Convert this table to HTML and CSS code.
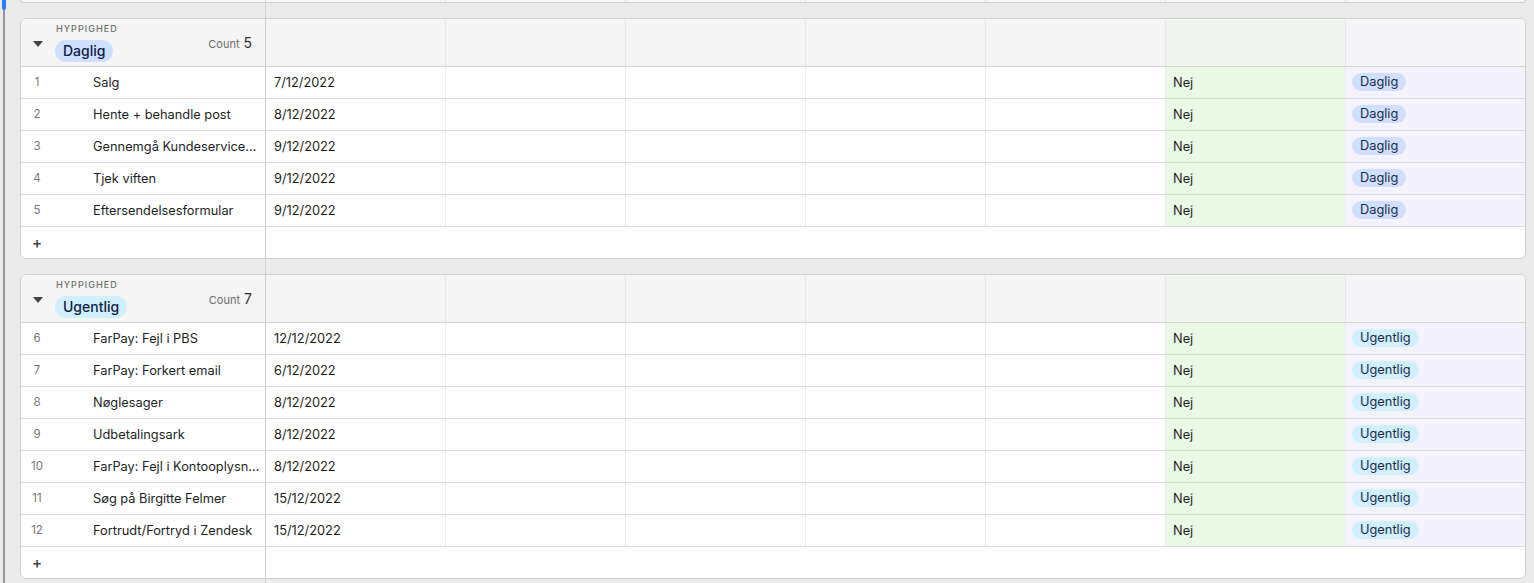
FILE: index.html
```html
<!DOCTYPE html>
<html lang="da">
<head>
<meta charset="utf-8">
<title>Hyppighed</title>
<link rel="stylesheet" href="styles.css">
</head>
<body>
<div class="scrollbar"></div>
<div class="view">
  <div class="prev grid">
    <div class="c first"></div><div class="c"></div><div class="c"></div><div class="c"></div><div class="c"></div><div class="c"></div><div class="c"></div><div class="c last"></div>
  </div>

  <section class="group">
    <div class="ghead grid">
      <div class="c first">
        <span class="tri"></span>
        <div class="gl">
          <span class="glabel">HYPPIGHED</span>
          <span class="gtag blue">Daglig</span>
        </div>
        <span class="count"><span class="cl">Count</span><span class="cn">5</span></span>
      </div>
      <div class="c"></div><div class="c"></div><div class="c"></div><div class="c"></div><div class="c"></div><div class="c green"></div><div class="c lav last"></div>
    </div>
    <div class="row grid"><div class="c first"><span class="num">1</span><span class="name">Salg</span></div><div class="c">7/12/2022</div><div class="c"></div><div class="c"></div><div class="c"></div><div class="c"></div><div class="c green">Nej</div><div class="c lav last"><span class="tag blue">Daglig</span></div></div>
    <div class="row grid"><div class="c first"><span class="num">2</span><span class="name">Hente + behandle post</span></div><div class="c">8/12/2022</div><div class="c"></div><div class="c"></div><div class="c"></div><div class="c"></div><div class="c green">Nej</div><div class="c lav last"><span class="tag blue">Daglig</span></div></div>
    <div class="row grid"><div class="c first"><span class="num">3</span><span class="name">Gennemgå Kundeservice…</span></div><div class="c">9/12/2022</div><div class="c"></div><div class="c"></div><div class="c"></div><div class="c"></div><div class="c green">Nej</div><div class="c lav last"><span class="tag blue">Daglig</span></div></div>
    <div class="row grid"><div class="c first"><span class="num">4</span><span class="name">Tjek viften</span></div><div class="c">9/12/2022</div><div class="c"></div><div class="c"></div><div class="c"></div><div class="c"></div><div class="c green">Nej</div><div class="c lav last"><span class="tag blue">Daglig</span></div></div>
    <div class="row grid"><div class="c first"><span class="num">5</span><span class="name">Eftersendelsesformular</span></div><div class="c">9/12/2022</div><div class="c"></div><div class="c"></div><div class="c"></div><div class="c"></div><div class="c green">Nej</div><div class="c lav last"><span class="tag blue">Daglig</span></div></div>
    <div class="add grid"><div class="c first"><span class="num plus">+</span></div><div class="c wide"></div></div>
  </section>

  <section class="group">
    <div class="ghead grid">
      <div class="c first">
        <span class="tri"></span>
        <div class="gl">
          <span class="glabel">HYPPIGHED</span>
          <span class="gtag cyan">Ugentlig</span>
        </div>
        <span class="count"><span class="cl">Count</span><span class="cn">7</span></span>
      </div>
      <div class="c"></div><div class="c"></div><div class="c"></div><div class="c"></div><div class="c"></div><div class="c green"></div><div class="c lav last"></div>
    </div>
    <div class="row grid"><div class="c first"><span class="num">6</span><span class="name">FarPay: Fejl i PBS</span></div><div class="c">12/12/2022</div><div class="c"></div><div class="c"></div><div class="c"></div><div class="c"></div><div class="c green">Nej</div><div class="c lav last"><span class="tag cyan">Ugentlig</span></div></div>
    <div class="row grid"><div class="c first"><span class="num">7</span><span class="name">FarPay: Forkert email</span></div><div class="c">6/12/2022</div><div class="c"></div><div class="c"></div><div class="c"></div><div class="c"></div><div class="c green">Nej</div><div class="c lav last"><span class="tag cyan">Ugentlig</span></div></div>
    <div class="row grid"><div class="c first"><span class="num">8</span><span class="name">Nøglesager</span></div><div class="c">8/12/2022</div><div class="c"></div><div class="c"></div><div class="c"></div><div class="c"></div><div class="c green">Nej</div><div class="c lav last"><span class="tag cyan">Ugentlig</span></div></div>
    <div class="row grid"><div class="c first"><span class="num">9</span><span class="name">Udbetalingsark</span></div><div class="c">8/12/2022</div><div class="c"></div><div class="c"></div><div class="c"></div><div class="c"></div><div class="c green">Nej</div><div class="c lav last"><span class="tag cyan">Ugentlig</span></div></div>
    <div class="row grid"><div class="c first"><span class="num">10</span><span class="name">FarPay: Fejl i Kontooplysn…</span></div><div class="c">8/12/2022</div><div class="c"></div><div class="c"></div><div class="c"></div><div class="c"></div><div class="c green">Nej</div><div class="c lav last"><span class="tag cyan">Ugentlig</span></div></div>
    <div class="row grid"><div class="c first"><span class="num">11</span><span class="name">Søg på Birgitte Felmer</span></div><div class="c">15/12/2022</div><div class="c"></div><div class="c"></div><div class="c"></div><div class="c"></div><div class="c green">Nej</div><div class="c lav last"><span class="tag cyan">Ugentlig</span></div></div>
    <div class="row grid"><div class="c first"><span class="num">12</span><span class="name">Fortrudt/Fortryd i Zendesk</span></div><div class="c">15/12/2022</div><div class="c"></div><div class="c"></div><div class="c"></div><div class="c"></div><div class="c green">Nej</div><div class="c lav last"><span class="tag cyan">Ugentlig</span></div></div>
    <div class="add grid"><div class="c first"><span class="num plus">+</span></div><div class="c wide"></div></div>
  </section>
</div>
</body>
</html>
```
FILE: styles.css
```css
* { box-sizing: border-box; }

html, body { height: 100%; }

body {
  margin: 0;
  overflow: hidden;
  background:
    linear-gradient(to right, transparent 265px, #d3d3d3 265px, #d3d3d3 266px, transparent 266px),
    #ebebeb;
  font-family: Inter, "Liberation Sans", "Noto Sans", sans-serif;
  color: #1d1f25;
  position: relative;
}

.scrollbar {
  position: absolute;
  left: 3px;
  top: 0;
  bottom: 0;
  width: 2px;
  background: #979797;
  z-index: 2;
}
.scrollbar::before {
  content: "";
  position: absolute;
  left: -1px;
  top: 0;
  width: 4px;
  height: 10px;
  background: #2d7ff9;
  border-radius: 0 0 2px 2px;
}

.view {
  padding-left: 20px;
}

.grid {
  display: grid;
  grid-template-columns: 245px repeat(6, 180px) 179px;
}

.c { min-width: 0; }

/* tail of previous group */
.prev {
  width: 1506px;
  height: 3px;
  background: #f7f7f7;
  border: 1px solid #cfcfcf;
  border-top: 0;
  border-radius: 0 0 3px 3px;
  margin-bottom: 15px;
}
.prev .c { border-right: 1px solid #e4e4e4; }
.prev .c.first { border-right-color: #d0d0d0; }
.prev .c.last { border-right: 0; }

.group {
  width: 1506px;
  background: #fff;
  border: 1px solid #cfcfcf;
  border-radius: 6px;
  overflow: hidden;
  margin-bottom: 15px;
}

/* group header */
.ghead {
  height: 48px;
  background: #f5f5f5;
  border-bottom: 1px solid #d3d3d3;
}
.ghead .c { border-right: 1px solid #e7e7e7; }
.ghead .c.green { background: #f2f6f0; }
.ghead .c.lav { background: #f5f5f8; }
.ghead .c.last { border-right: 0; }
.ghead .c.first {
  border-right-color: #d0d0d0;
  display: flex;
  align-items: center;
  padding: 0 13px 0 12px;
}

.tri {
  width: 0;
  height: 0;
  border-left: 5px solid transparent;
  border-right: 5px solid transparent;
  border-top: 6px solid #444;
  margin-right: 12px;
  margin-top: 2px;
}

.gl {
  align-self: stretch;
  display: flex;
  flex-direction: column;
  align-items: flex-start;
  padding-top: 4px;
}
.glabel {
  font-size: 9px;
  line-height: 12px;
  letter-spacing: 1.05px;
  color: #6e6e6e;
  font-weight: 500;
  margin-left: 1px;
  margin-bottom: 5px;
}
.gtag {
  height: 22px;
  line-height: 22px;
  padding: 0 8px;
  border-radius: 11px;
  font-size: 14px;
  font-weight: 500;
  color: #102046;
}

.count {
  margin-left: auto;
  display: flex;
  align-items: baseline;
  gap: 4px;
  margin-bottom: 1px;
}
.cl { font-size: 11px; color: #6b6b6b; }
.cn { font-size: 14px; color: #333; }

/* rows */
.row {
  height: 32px;
  border-bottom: 1px solid #dcdcdc;
}
.row .c {
  border-right: 1px solid #ececec;
  display: flex;
  align-items: center;
  padding: 0 8px 1px;
  font-size: 12.8px;
  white-space: nowrap;
}
.row .c.last { border-right: 0; }
.row .c.green { background: #eaf8e6; padding-left: 7px; }
.row .c.lav { background: #f4f2fc; padding-left: 6px; }
.row .c.first {
  border-right-color: #d0d0d0;
  padding: 0 2px 1px 0;
}

.num {
  flex: 0 0 32px;
  text-align: center;
  font-size: 11.5px;
  color: #777;
}
.name {
  flex: 1;
  min-width: 0;
  overflow: hidden;
  text-overflow: ellipsis;
  margin-left: 40px;
}

.tag {
  height: 18px;
  line-height: 18px;
  padding: 0 8px;
  border-radius: 9px;
  font-size: 12.8px;
  color: #1d2a48;
}

.blue { background: #cfdfff; }
.cyan { background: #d0f0fd; }

/* add row */
.add {
  height: 31px;
  grid-template-columns: 245px 1fr;
}
.add .c.first {
  border-right: 1px solid #d0d0d0;
  display: flex;
  align-items: center;
}
.plus {
  font-size: 15px;
  font-weight: 600;
  color: #444;
}
```
